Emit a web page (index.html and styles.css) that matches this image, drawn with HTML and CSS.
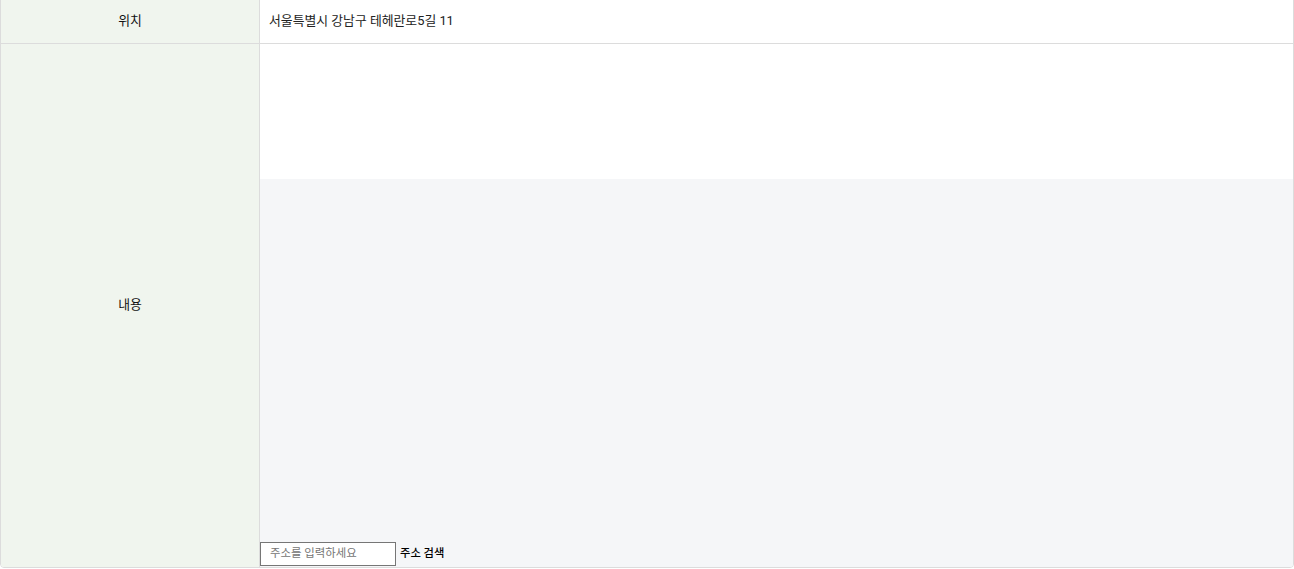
FILE: index.html
```html
<!DOCTYPE html>
<html lang="ko">
<head>
<meta charset="utf-8">
<link rel="stylesheet" href="styles.css">
</head>
<body>
<div class="table">
  <div class="row first">
    <div class="th">위치</div>
    <div class="td">서울특별시 강남구 테헤란로5길 11</div>
  </div>
  <div class="row second">
    <div class="th">내용</div>
    <div class="td content">
      <div class="blank"></div>
      <div class="map">
        <div class="search">
          <input class="addr" type="text" placeholder="주소를 입력하세요">
          <button class="btn" type="button">주소 검색</button>
        </div>
      </div>
    </div>
  </div>
</div>
</body>
</html>
```

FILE: styles.css
```css
html, body {
  margin: 0;
  padding: 0;
  background: #fff;
  overflow: hidden;
}
body {
  font-family: Roboto, "Noto Sans CJK KR", sans-serif;
  color: #222;
  font-size: 12.85px;
}
.table {
  box-sizing: border-box;
  width: 1294px;
  margin-top: -1px;
  border: 1px solid #dcdcdc;
  border-radius: 0 0 4px 4px;
  overflow: hidden;
  display: flex;
  flex-direction: column;
}
.row {
  display: flex;
}
.row.first {
  height: 44px;
  border-bottom: 1px solid #dcdcdc;
  box-sizing: border-box;
}
.row.second {
  height: 523px;
}
.th {
  box-sizing: border-box;
  width: 259px;
  flex: none;
  background: #f0f5ee;
  border-right: 1px solid #dcdcdc;
  display: flex;
  align-items: center;
  justify-content: center;
  padding-bottom: 4px;
  font-weight: 400;
  color: #111;
}
.td {
  flex: 1;
  display: flex;
  align-items: center;
  padding: 0 9px 4px;
}
.td.content {
  padding: 0;
  flex-direction: column;
  align-items: stretch;
}
.blank {
  height: 135px;
  flex: none;
}
.map {
  flex: 1;
  background: #f5f6f8;
  display: flex;
  flex-direction: column;
  justify-content: flex-end;
  padding-bottom: 1px;
}
.search {
  display: flex;
  align-items: center;
}
.addr {
  box-sizing: border-box;
  width: 136px;
  height: 24px;
  margin: 0;
  border: 1px solid #767676;
  border-radius: 0;
  padding: 0 9px 3px;
  font-family: Roboto, "Noto Sans CJK KR", sans-serif;
  font-size: 11.4px;
  background: #fff;
  color: #222;
}
.addr::placeholder {
  color: #757575;
}
.btn {
  border: none;
  background: transparent;
  padding: 0 4px 4px;
  margin: 0;
  font-family: Roboto, "Noto Sans CJK KR", sans-serif;
  font-size: 11.3px;
  font-weight: 500;
  color: #000;
  height: 24px;
}
```
